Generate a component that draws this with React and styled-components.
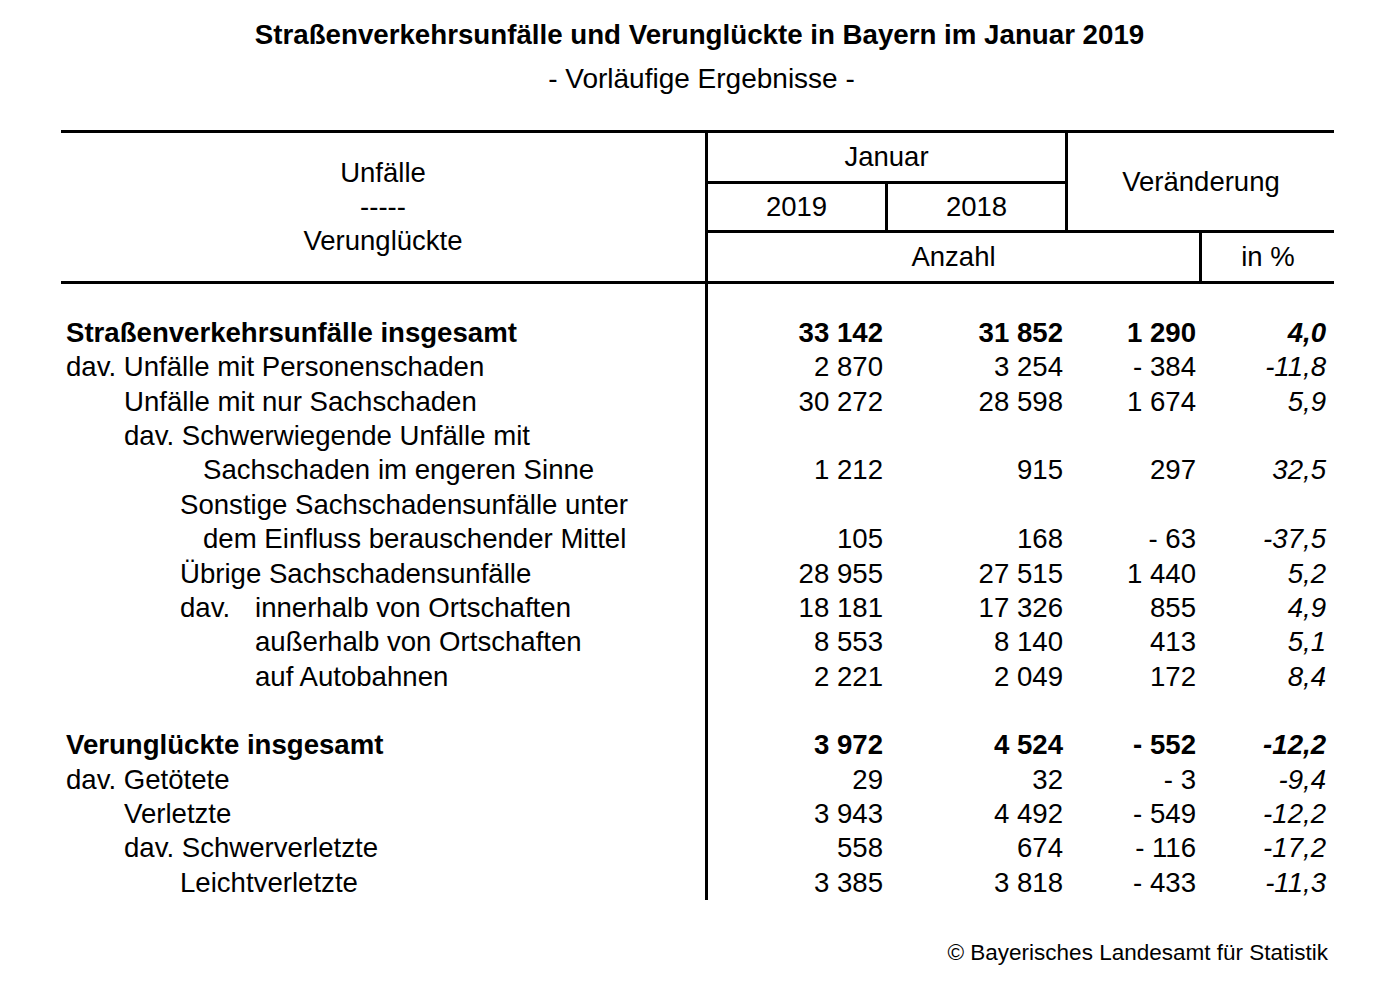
import styled, { createGlobalStyle } from 'styled-components';

const GlobalStyle = createGlobalStyle`
  html, body {
    margin: 0;
    padding: 0;
    background: #fff;
  }
  body {
    font-family: "Liberation Sans", Arial, sans-serif;
    color: #000;
  }
`;

const COLS = '647px 180px 180px 134px 132px';
const LINE = '3px solid #000';

const Page = styled.div`
  width: 1395px;
  height: 1004px;
  box-sizing: border-box;
  padding: 18px 61px 0;
`;

const Title = styled.h1`
  margin: 0;
  font-size: 27.7px;
  line-height: 34px;
  font-weight: bold;
  text-align: center;
  padding-left: 4px;
`;

const Subtitle = styled.div`
  margin-top: 10px;
  font-size: 28px;
  line-height: 34px;
  text-align: center;
  padding-left: 8px;
`;

const Header = styled.div`
  margin-top: 34px;
  display: grid;
  grid-template-columns: ${COLS};
  grid-template-rows: 51px 49px 48px;
  border-top: ${LINE};
  border-bottom: ${LINE};
  font-size: 27.5px;
`;

const HeadCell = styled.div`
  box-sizing: border-box;
  display: flex;
  flex-direction: column;
  align-items: center;
  justify-content: center;
  line-height: 34px;
  grid-column: ${p => p.$col};
  grid-row: ${p => p.$row};
  border-right: ${p => (p.$right ? LINE : 'none')};
  border-bottom: ${p => (p.$bottom ? LINE : 'none')};
`;

const Body = styled.div`
  display: flex;
  flex-direction: column;
  font-size: 27.6px;
`;

const Row = styled.div`
  display: grid;
  grid-template-columns: ${COLS};
  height: ${p => p.$h || '34.36px'};
  line-height: ${p => p.$h || '34.36px'};
  font-weight: ${p => (p.$bold ? 'bold' : 'normal')};
  white-space: pre;
`;

const Label = styled.div`
  box-sizing: border-box;
  border-right: ${LINE};
  padding-left: ${p => p.$indent}px;
`;

const Prefix = styled.span`
  display: inline-block;
  width: 75px;
`;

const Num = styled.div`
  text-align: right;
  padding-right: ${p => p.$pad}px;
  font-style: ${p => (p.$italic ? 'italic' : 'normal')};
`;

const Footer = styled.div`
  margin-top: 40px;
  padding-right: 6px;
  text-align: right;
  font-size: 22.5px;
  line-height: 26px;
`;

const INDENT = [5, 63, 119, 142, 194];
const PADS = [5, 5, 6, 8];

const rows = [
  { label: 'Straßenverkehrsunfälle insgesamt', level: 0, bold: true, v: ['33 142', '31 852', '1 290', '4,0'] },
  { label: 'dav. Unfälle mit Personenschaden', level: 0, v: ['2 870', '3 254', '- 384', '-11,8'] },
  { label: 'Unfälle mit nur Sachschaden', level: 1, v: ['30 272', '28 598', '1 674', '5,9'] },
  { label: 'dav. Schwerwiegende Unfälle mit', level: 1 },
  { label: 'Sachschaden im engeren Sinne', level: 3, v: ['1 212', '915', '297', '32,5'] },
  { label: 'Sonstige Sachschadensunfälle unter', level: 2 },
  { label: 'dem Einfluss berauschender Mittel', level: 3, v: ['105', '168', '- 63', '-37,5'] },
  { label: 'Übrige Sachschadensunfälle', level: 2, v: ['28 955', '27 515', '1 440', '5,2'] },
  { prefix: 'dav.', label: 'innerhalb von Ortschaften', level: 2, v: ['18 181', '17 326', '855', '4,9'] },
  { label: 'außerhalb von Ortschaften', level: 4, v: ['8 553', '8 140', '413', '5,1'] },
  { label: 'auf Autobahnen', level: 4, v: ['2 221', '2 049', '172', '8,4'] },
  { blank: true },
  { label: 'Verunglückte insgesamt', level: 0, bold: true, v: ['3 972', '4 524', '- 552', '-12,2'] },
  { label: 'dav. Getötete', level: 0, v: ['29', '32', '- 3', '-9,4'] },
  { label: 'Verletzte', level: 1, v: ['3 943', '4 492', '- 549', '-12,2'] },
  { label: 'dav. Schwerverletzte', level: 1, v: ['558', '674', '- 116', '-17,2'] },
  { label: 'Leichtverletzte', level: 2, v: ['3 385', '3 818', '- 433', '-11,3'] },
];

const DataRow = ({ row }) => {
  const values = row.v || ['', '', '', ''];
  return (
    <Row $bold={row.bold}>
      <Label $indent={INDENT[row.level || 0]}>
        {row.prefix && <Prefix>{row.prefix}</Prefix>}
        {row.label}
      </Label>
      {values.map((val, i) => (
        <Num key={i} $pad={PADS[i]} $italic={i === 3}>
          {val}
        </Num>
      ))}
    </Row>
  );
};

export default function App() {
  return (
    <>
      <GlobalStyle />
      <Page>
        <Title>Straßenverkehrsunfälle und Verunglückte in Bayern im Januar 2019</Title>
        <Subtitle>- Vorläufige Ergebnisse -</Subtitle>

        <Header>
          <HeadCell $col="1" $row="1 / 4" $right>
            <span>Unfälle</span>
            <span>-----</span>
            <span>Verunglückte</span>
          </HeadCell>
          <HeadCell $col="2 / 4" $row="1" $right $bottom>Januar</HeadCell>
          <HeadCell $col="4 / 6" $row="1 / 3" $bottom>Veränderung</HeadCell>
          <HeadCell $col="2" $row="2" $right $bottom>2019</HeadCell>
          <HeadCell $col="3" $row="2" $right $bottom>2018</HeadCell>
          <HeadCell $col="2 / 5" $row="3" $right>Anzahl</HeadCell>
          <HeadCell $col="5" $row="3">in %</HeadCell>
        </Header>

        <Body>
          <Row $h="32px">
            <Label />
          </Row>
          {rows.map((row, i) => (
            <DataRow key={i} row={row} />
          ))}
        </Body>

        <Footer>© Bayerisches Landesamt für Statistik</Footer>
      </Page>
    </>
  );
}
